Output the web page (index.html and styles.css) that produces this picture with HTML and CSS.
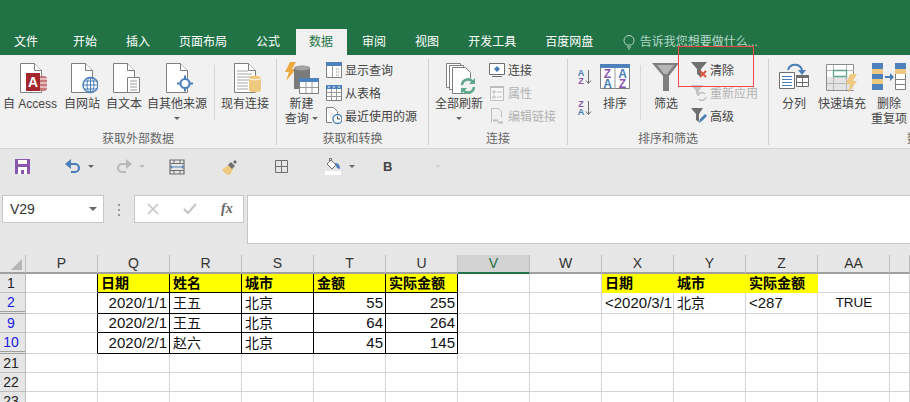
FILE: index.html
```html
<!DOCTYPE html>
<html lang="zh-CN">
<head>
  <meta charset="UTF-8">
  <meta name="viewport" content="width=device-width, initial-scale=1.0">
  <title>高级筛选</title>
  <link rel="stylesheet" href="styles.css">
</head>
<body>
  <svg class="defs" width="0" height="0">
    <symbol id="doc" viewBox="0 0 22 30"><path d="M.5.5h14l7 7v22H.5z" fill="#fff" stroke="#7f7f7f"/><path d="M14.5.5v7h7" fill="#fff" stroke="#7f7f7f"/></symbol>
    <symbol id="funnel" viewBox="0 0 16 16"><path d="M0 0h16L10 7v8L6 12V7z" fill="#6f6f6f"/></symbol>
  </svg>

  <div class="titlebar"></div>

  <div class="tabs">
    <span class="tab tab-first">文件</span>
    <span class="tab">开始</span>
    <span class="tab">插入</span>
    <span class="tab">页面布局</span>
    <span class="tab">公式</span>
    <span class="tab tab-active">数据</span>
    <span class="tab">审阅</span>
    <span class="tab">视图</span>
    <span class="tab">开发工具</span>
    <span class="tab">百度网盘</span>
    <span class="tellme">
      <svg width="12" height="15" viewBox="0 0 12 15"><path d="M3.500 10C2 8.500 1 7.500 1 5.500a5 5 0 0 1 10 0c0 2-1 3-2.500 4.500zM4 12h4M5 14h2" fill="none" stroke="#b5d8c6"/></svg>
      告诉我您想要做什么...
    </span>
  </div>

  <div class="ribbon">
    <section class="group group-ext">
      <div class="group-body">
        <div class="big w60">
          <svg class="icon" width="33" height="32" viewBox="0 0 33 32">
            <use href="#doc" x="6" y="1" width="22" height="30"/>
            <rect x="21" y="14" width="12" height="15" rx="3" fill="#c9787c"/>
            <path d="M22 17h11M22 21h11M22 25h11" stroke="#fff"/>
            <rect x="12" y="11" width="14" height="18" fill="#a4262c"/>
            <text x="19" y="25" class="svg-a">A</text>
          </svg>
          <span>自 Access</span>
        </div>
        <div class="big w44">
          <svg class="icon" width="32" height="32" viewBox="0 0 32 32">
            <use href="#doc" x="5" y="1" width="22" height="30"/>
            <circle cx="24.500" cy="23" r="7.500" fill="#fff" stroke="#4a7eb8" stroke-width="1.500"/>
            <path d="M17 23h15M18.500 19h12M18.500 27h12M24.500 15.500v15" stroke="#4a7eb8"/>
            <ellipse cx="24.500" cy="23" rx="3.500" ry="7.500" fill="none" stroke="#4a7eb8"/>
          </svg>
          <span>自网站</span>
        </div>
        <div class="big w40">
          <svg class="icon" width="32" height="32" viewBox="0 0 32 32">
            <use href="#doc" x="5" y="1" width="22" height="30"/>
            <path d="M19.500 15.500h12v15h-12z" fill="#fff" stroke="#7f7f7f"/>
            <path d="M22 19h7M22 22h7M22 25h7M22 28h7" stroke="#9a9a9a"/>
          </svg>
          <span>自文本</span>
        </div>
        <div class="big w66">
          <svg class="icon" width="32" height="32" viewBox="0 0 32 32">
            <use href="#doc" x="5" y="1" width="22" height="30"/>
            <circle cx="24" cy="21.500" r="4.500" fill="#fff" stroke="#4a7eb8" stroke-width="2"/>
            <path d="M16 21.500h4M28 21.500h4M24 13.500v4M24 25.500v4" stroke="#4a7eb8" stroke-width="2"/>
          </svg>
          <span>自其他来源</span>
          <i class="caret"></i>
        </div>
        <div class="vsep vsep-ext"></div>
        <div class="big w54">
          <svg class="icon" width="32" height="32" viewBox="0 0 32 32">
            <use href="#doc" x="5" y="1" width="22" height="30"/>
            <path d="M8 9h11M8 12h15M8 15h15M8 18h15M8 21h11M8 24h11M8 27h11" stroke="#a6a6a6"/>
            <path d="M20 16c0-3 12-3 12 0v12c0 3-12 3-12 0z" fill="#efc97f"/>
            <path d="M20 16c0 2.500 12 2.500 12 0" fill="none" stroke="#fff"/>
          </svg>
          <span>现有连接</span>
        </div>
      </div>
      <div class="group-label">获取外部数据</div>
    </section>

    <section class="group group-query">
      <div class="group-body">
        <div class="big w50">
          <svg class="icon" width="34" height="32" viewBox="0 0 34 32">
            <path d="M5 0h6L7 7h4L1 19l3-9H0z" fill="#eba93f"/>
            <path d="M9 6c0-3 16-3 16 0v21H9z" fill="#7a7a7a"/>
            <ellipse cx="17" cy="6" rx="8" ry="2.500" fill="#a3a3a3"/>
            <path d="M14.500 16.500h19v15h-19z" fill="#fff" stroke="#7f7f7f"/>
            <path d="M14 16h20v4H14z" fill="#4f81bd"/>
            <path d="M21 20v11M27 20v11M15 25.500h18" stroke="#9a9a9a"/>
          </svg>
          <span>新建</span>
          <span>查询 <i class="caret caret-inline"></i></span>
        </div>
        <div class="smalls">
          <div class="small">
            <svg width="16" height="16" viewBox="0 0 16 16"><path d="M.5 .5h15v15H.5z" fill="#fff" stroke="#7f7f7f"/><path d="M0 0h16v4H0z" fill="#4f81bd"/><path d="M6.500 4v11" stroke="#9a9a9a"/><path d="M10 7h4M10 10h4M10 13h4" stroke="#7f7f7f" stroke-dasharray="1 1"/></svg>
            <span>显示查询</span>
          </div>
          <div class="small">
            <svg width="16" height="16" viewBox="0 0 16 16"><path d="M.5 .5h15v15H.5z" fill="#fff" stroke="#7f7f7f"/><path d="M0 0h16v4H0z" fill="#4f81bd"/><path d="M2 2h2M7 2h2M12 2h2" stroke="#fff"/><path d="M5.500 4v11M10.500 4v11M1 7.500h14M1 11.500h14" stroke="#9a9a9a"/></svg>
            <span>从表格</span>
          </div>
          <div class="small">
            <svg width="16" height="17" viewBox="0 0 16 17"><path d="M.5 .5h7l4 4v4M6 15.500H.5V.5" fill="#fff" stroke="#7f7f7f"/><circle cx="11.500" cy="12" r="4.500" fill="#fff" stroke="#4a7eb8" stroke-width="1.300"/><path d="M11.500 9.500V12h2.500" fill="none" stroke="#444"/></svg>
            <span>最近使用的源</span>
          </div>
        </div>
      </div>
      <div class="group-label">获取和转换</div>
    </section>

    <section class="group group-conn">
      <div class="group-body">
        <div class="big w60 refresh">
          <svg class="icon" width="32" height="32" viewBox="0 0 32 32">
            <path d="M3.500 1.500h14v24h-14z" fill="#fff" stroke="#7f7f7f"/>
            <path d="M6.500 3.500h14v24h-14z" fill="#fff" stroke="#7f7f7f"/>
            <path d="M9.500 5.500h13l5 5v21h-18z" fill="#fff" stroke="#7f7f7f"/>
            <circle cx="25" cy="24" r="7.500" fill="#f1f1f1"/>
            <path d="M19 23a6 6 0 0 1 10.500-3.500M31 25a6 6 0 0 1-10.500 3.500" fill="none" stroke="#5fa88a" stroke-width="2.500"/>
            <path d="M32 16v6h-6zM18 32v-6h6z" fill="#5fa88a"/>
          </svg>
          <span>全部刷新</span>
          <i class="caret"></i>
        </div>
        <div class="smalls">
          <div class="small">
            <svg width="16" height="16" viewBox="0 0 16 16"><path d="M.5 1.500h15v11H.5z" fill="#fff" stroke="#6f6f6f"/><path d="M3 14.500h10" stroke="#6f6f6f"/><path d="M8 4l3 3-3 3-3-3z" fill="#4a7eb8"/></svg>
            <span>连接</span>
          </div>
          <div class="small off">
            <svg width="16" height="16" viewBox="0 0 16 16"><path d="M1.500 1.500h13v14h-13z" fill="#f7f7f7" stroke="#bdbdbd"/><path d="M1 1h14v2H1z" fill="#bdbdbd"/><path d="M4 6h2v2H4zM4 11h2v2H4z" fill="none" stroke="#bdbdbd"/><path d="M8 7h5M8 12h5" stroke="#bdbdbd"/></svg>
            <span>属性</span>
          </div>
          <div class="small off">
            <svg width="16" height="16" viewBox="0 0 16 16"><path d="M2.500 14.500V.5h7l3 3v6" fill="none" stroke="#bdbdbd"/><path d="M4 12.500h5M9 14.500h5" stroke="#bdbdbd" stroke-width="2"/></svg>
            <span>编辑链接</span>
          </div>
        </div>
      </div>
      <div class="group-label">连接</div>
    </section>

    <section class="group group-sort">
      <div class="group-body">
        <div class="sort-col">
          <svg width="15" height="17" viewBox="0 0 15 17">
            <text x="4" y="8" class="svg-az svg-blue">A</text><text x="4" y="16" class="svg-az svg-purple">Z</text>
            <path d="M11.500 2v13M9 12.500l2.500 3 2.500-3" fill="none" stroke="#6f6f6f"/>
          </svg>
          <svg width="15" height="17" viewBox="0 0 15 17">
            <text x="4" y="8" class="svg-az svg-purple">Z</text><text x="4" y="16" class="svg-az svg-blue">A</text>
            <path d="M11.500 2v13M9 12.500l2.500 3 2.500-3" fill="none" stroke="#6f6f6f"/>
          </svg>
        </div>
        <div class="big w42">
          <svg class="icon" width="30" height="32" viewBox="0 0 30 32">
            <path d="M.5 2.500h29v24H.5z" fill="#fff" stroke="#7f7f7f"/>
            <path d="M0 2h30v4H0z" fill="#4f81bd"/>
            <path d="M15 6v21" stroke="#9a9a9a"/>
            <text x="7.500" y="15.500" class="svg-big svg-purple">Z</text><text x="7.500" y="25.500" class="svg-big svg-blue">A</text>
            <text x="22.500" y="15.500" class="svg-big svg-blue">A</text><text x="22.500" y="25.500" class="svg-big svg-purple">Z</text>
          </svg>
          <span>排序</span>
        </div>
        <div class="vsep vsep-sort"></div>
        <div class="big w50">
          <svg class="icon" width="28" height="32" viewBox="0 0 28 32">
            <path d="M0 1h27L17 14v15h-6V14z" fill="#7f7f7f"/>
            <path d="M5 3h17l-7 9h-3z" fill="#b5b5b5"/>
          </svg>
          <span>筛选</span>
        </div>
        <div class="smalls">
          <div class="small">
            <svg width="16" height="16" viewBox="0 0 16 16"><use href="#funnel" width="16" height="16"/><path d="M9 9l6 6M15 9l-6 6" stroke="#d9573c" stroke-width="2"/></svg>
            <span>清除</span>
          </div>
          <div class="small off">
            <svg width="16" height="16" viewBox="0 0 16 16"><path d="M0 0h12L8 6v5L5 9V6z" fill="#c4c4c4"/><path d="M7 11a4 4 0 0 1 7-2M15 12a4 4 0 0 1-7 2" fill="none" stroke="#bdbdbd" stroke-width="1.500"/></svg>
            <span>重新应用</span>
          </div>
          <div class="small">
            <svg width="16" height="16" viewBox="0 0 16 16"><path d="M0 0h12L8 6v8L5 12V6z" fill="#6f6f6f"/><path d="M8 15l1-4 5-5 2 2-5 5z" fill="#4a7eb8"/></svg>
            <span>高级</span>
          </div>
        </div>
      </div>
      <div class="group-label">排序和筛选</div>
    </section>

    <section class="group group-tools">
      <div class="group-body">
        <div class="big w50">
          <svg class="icon" width="30" height="32" viewBox="0 0 30 32">
            <path d="M.5 10.500h15v16H.5z" fill="#fff" stroke="#6f6f6f"/>
            <path d="M3 14.500h10M3 17.500h10M3 20.500h10M3 23.500h10" stroke="#4a7eb8"/>
            <path d="M17.500 13.500h12v11h-12z" fill="#fff" stroke="#6f6f6f"/>
            <path d="M17 13h13v3H17z" fill="#6f6f6f"/>
            <path d="M23.500 16v8M18 20.500h11" stroke="#6f6f6f"/>
            <path d="M9 8C11 1 21 1 23 8" fill="none" stroke="#4a7eb8" stroke-width="2"/>
            <path d="M19 8h8l-4 5z" fill="#4a7eb8"/>
          </svg>
          <span>分列</span>
        </div>
        <div class="big w-fill">
          <svg class="icon" width="32" height="32" viewBox="0 0 32 32">
            <path d="M.5 2.500h27v26H.5z" fill="#fff" stroke="#8c8c8c"/>
            <path d="M1 15h27v13H1z" fill="#e4e4e4"/>
            <path d="M7.500 3v25M20.500 3v25M1 8.500h27M1 21.500h27" stroke="#b5b5b5"/>
            <path d="M7.500 8.500h13v6h-13z" fill="#fff" stroke="#5fa88a" stroke-width="1.300"/>
            <path d="M24 12h7l-4 7h4l-9 12 2-9h-4z" fill="#efc97f"/>
          </svg>
          <span>快速填充</span>
        </div>
        <div class="big w-dedupe">
          <svg class="icon" width="34" height="32" viewBox="0 0 34 32">
            <path d="M0 1h11v27H0z" fill="#4f81bd"/>
            <path d="M0 7h11v5H0zM0 17h11v5H0z" fill="#efc97f"/>
            <path d="M13 15h7" stroke="#4a7eb8" stroke-width="2"/><path d="M18 11l4 4-4 4z" fill="#4a7eb8"/>
            <path d="M23.500 1.500h10v26h-10z" fill="#fff" stroke="#7f7f7f"/>
            <path d="M23 1h11v6H23z" fill="#4f81bd"/>
            <path d="M23 7h11v5H23z" fill="#efc97f"/>
            <path d="M24 17.500h9M24 22.500h9" stroke="#7f7f7f"/>
          </svg>
          <span>删除</span>
          <span>重复项</span>
        </div>
      </div>
      <div class="group-label group-label-cut">数据工具</div>
    </section>
  </div>

  <div class="redbox"></div>

  <div class="qat">
    <svg width="15" height="15" viewBox="0 0 15 15"><path d="M0 0h15v15H0z" fill="#8a57ad"/><path d="M3 1h9v4H3z" fill="#fff"/><path d="M3 8h9v7H3z" fill="#fff"/><path d="M6 11h3v4H6z" fill="#8a57ad"/></svg>
    <span class="qat-btn">
      <svg width="16" height="16" viewBox="0 0 16 16"><path d="M2 5h8a4 4 0 0 1 0 8H6" fill="none" stroke="#4a7eb8" stroke-width="2.200"/><path d="M6 0v10L0 5z" fill="#4a7eb8"/></svg>
    </span>
    <i class="caret"></i>
    <span class="qat-btn">
      <svg width="16" height="16" viewBox="0 0 16 16"><path d="M14 5H6a4 4 0 0 0 0 8h4" fill="none" stroke="#b9b9b9" stroke-width="2.200"/><path d="M10 0v10l6-5z" fill="#b9b9b9"/></svg>
    </span>
    <i class="caret caret-off"></i>
    <svg width="16" height="16" viewBox="0 0 16 16"><path d="M1 1h14v14H1z" fill="none" stroke="#6f6f6f" stroke-width="1.200"/><path d="M1 4.500h14M1 11.500h14M5 1v3.500M11 1v3.500M5 11.500V15M11 11.500V15" stroke="#6f6f6f"/><path d="M3 8h10" stroke="#4a7eb8"/><path d="M3 6l-2 2 2 2zM13 6l2 2-2 2z" fill="#4a7eb8"/></svg>
    <svg width="16" height="16" viewBox="0 0 16 16"><path d="M0 11l6-5 5 4-3 6c-3 0-6-2-8-5z" fill="#efc97f"/><path d="M6 6l3-3 4 4-3 3z" fill="#6f6f6f"/><path d="M11 3l2-2 2 2-2 2z" fill="#6f6f6f"/></svg>
    <svg width="14" height="14" viewBox="0 0 14 14"><path d="M.5 .5h12v12H.5zM6.500 .5v12M.5 6.500h12" fill="none" stroke="#6f6f6f"/></svg>
    <svg width="16" height="18" viewBox="0 0 16 18"><path d="M0 13h16v4H0z" fill="#fff"/><path d="M6 2l5 5-4 4-5-5z" fill="#fff" stroke="#6f6f6f"/><path d="M4.500 4V.5h2V3" fill="none" stroke="#6f6f6f"/><path d="M10 5c3 0 5 2 5 6l-3-1z" fill="#4a7eb8"/></svg>
    <i class="caret"></i>
    <b class="qat-bold">B</b>
    <i class="caret caret-faint"></i>
  </div>

  <div class="formula-row">
    <div class="namebox"><span>V29</span><i class="caret caret-name"></i></div>
    <div class="dots"><i></i><i></i><i></i></div>
    <div class="fxbox">
      <svg width="12" height="12" viewBox="0 0 12 12"><path d="M1 1l10 10M11 1L1 11" stroke="#c6c6c6" stroke-width="1.600"/></svg>
      <svg width="14" height="12" viewBox="0 0 14 12"><path d="M1 6l4 4 8-9" fill="none" stroke="#c6c6c6" stroke-width="2.200"/></svg>
      <span class="fx">fx</span>
    </div>
    <div class="formula-input"></div>
  </div>

  <div class="sheet">
    <table class="cells">
      <colgroup><col class="col-rowhead"><col span="12" class="col-data"><col class="col-rest"></colgroup>
      <tr class="colheads">
        <th class="corner"><i></i></th><th>P</th><th>Q</th><th>R</th><th>S</th><th>T</th><th>U</th><th class="col-sel">V</th><th>W</th><th>X</th><th>Y</th><th>Z</th><th>AA</th><th></th>
      </tr>
      <tr>
        <th class="rowhead">1</th>
        <td class="kr"></td>
        <td class="k hd">日期</td><td class="k hd">姓名</td><td class="k hd">城市</td><td class="k hd">金额</td><td class="k hd">实际金额</td>
        <td></td><td></td>
        <td class="hd plain">日期</td><td class="hd plain">城市</td><td class="hd plain">实际金额</td>
        <td></td><td></td>
      </tr>
      <tr>
        <th class="rowhead blue hid">2</th>
        <td class="kr"></td>
        <td class="k num">2020/1/1</td><td class="k">王五</td><td class="k">北京</td><td class="k num">55</td><td class="k num">255</td>
        <td></td><td></td>
        <td class="crit">&lt;2020/3/1</td><td>北京</td><td class="crit">&lt;287</td><td class="mid">TRUE</td><td></td>
      </tr>
      <tr>
        <th class="rowhead blue">9</th>
        <td class="kr"></td>
        <td class="k num">2020/2/1</td><td class="k">王五</td><td class="k">北京</td><td class="k num">64</td><td class="k num">264</td>
        <td></td><td></td><td></td><td></td><td></td><td></td><td></td>
      </tr>
      <tr>
        <th class="rowhead blue hid">10</th>
        <td class="kr"></td>
        <td class="k num">2020/2/1</td><td class="k">赵六</td><td class="k">北京</td><td class="k num">45</td><td class="k num">145</td>
        <td></td><td></td><td></td><td></td><td></td><td></td><td></td>
      </tr>
      <tr>
        <th class="rowhead">21</th>
        <td></td><td></td><td></td><td></td><td></td><td></td><td></td><td></td><td></td><td></td><td></td><td></td><td></td>
      </tr>
      <tr>
        <th class="rowhead">22</th>
        <td></td><td></td><td></td><td></td><td></td><td></td><td></td><td></td><td></td><td></td><td></td><td></td><td></td>
      </tr>
      <tr>
        <th class="rowhead">23</th>
        <td></td><td></td><td></td><td></td><td></td><td></td><td></td><td></td><td></td><td></td><td></td><td></td><td></td>
      </tr>
    </table>
  </div>
</body>
</html>
```

FILE: styles.css
```css
* {
  box-sizing: border-box;
}

html, body {
  margin: 0;
  height: 402px;
  overflow: hidden;
}

body {
  position: relative;
  background: #e6e6e6;
  color: #444;
  font-family: "Liberation Sans", "Noto Sans CJK SC", sans-serif;
  font-size: 12px;
}

.defs {
  position: absolute;
}

/* top green bars */
.titlebar {
  height: 29px;
  background: #217346;
}

.tabs {
  display: flex;
  height: 26px;
  background: #217346;
  color: #fff;
  line-height: 26px;
}

.tab {
  padding: 0 14.5px;
}

.tab-first {
  padding: 0 20.5px 0 14px;
}

.tab-active {
  margin: 0 .5px 0 1.5px;
  padding: 0 14px 0 13px;
  background: #f1f1f1;
  color: #217346;
}

.tellme {
  display: flex;
  align-items: center;
  gap: 5px;
  margin-left: 15px;
  color: #b5d8c6;
}

/* ribbon */
.ribbon {
  display: flex;
  height: 94px;
  padding-top: 4px;
  background: #f1f1f1;
  border-bottom: 1px solid #d5d5d5;
  overflow: hidden;
}

.group {
  flex: none;
  height: 86px;
  border-right: 1px solid #d0d0d0;
}

.group-ext { width: 277px; }
.group-query { width: 152px; }
.group-conn { width: 139px; }
.group-sort { width: 201px; }
.group-tools { width: 141px; border-right: 0; }

.group-body {
  display: flex;
  height: 73px;
}

.group-label {
  height: 13px;
  color: #666;
  line-height: 15px;
  text-align: center;
}

.group-label-cut {
  padding-left: 138px;
  text-align: left;
  white-space: nowrap;
}

.big {
  display: flex;
  flex: none;
  flex-direction: column;
  align-items: center;
  line-height: 15px;
  white-space: nowrap;
}

.icon {
  flex: none;
  margin: 3px 0;
}

.w40 { width: 40px; }
.w42 { width: 42px; }
.w44 { width: 44px; }
.w50 { width: 50px; }
.w54 { width: 54px; }
.w60 { width: 60px; }
.w66 { width: 66px; }

.w-fill { width: 46px; }
.w-dedupe { width: 48px; }

.vsep {
  flex: none;
  width: 1px;
  margin-top: 6px;
  height: 55px;
  background: #d8d8d8;
}

.vsep-ext { margin: 6px 3px 0 4px; }
.vsep-sort { margin: 6px 0 0 4px; }

.group-query .big { width: 49px; }

.smalls {
  display: flex;
  flex-direction: column;
  margin-top: -1px;
}

.small {
  display: flex;
  align-items: center;
  gap: 3px;
  height: 23px;
  white-space: nowrap;
}

.off {
  color: #b3b3b3;
}

.sort-col {
  display: flex;
  flex: none;
  flex-direction: column;
  gap: 14px;
  width: 26px;
  padding: 9px 0 0 9px;
}

.caret {
  display: block;
  flex: none;
  width: 0;
  height: 0;
  margin-top: 5px;
  border: 3px solid transparent;
  border-top: 3px solid #666;
  border-bottom: 0;
}

.caret-inline {
  display: inline-block;
  margin: 0 0 2px;
  vertical-align: middle;
}

.caret-off { border-top-color: #bdbdbd; }
.caret-faint { border-top-color: #d4d4d4; }

.svg-a {
  fill: #fff;
  font-size: 14px;
  font-weight: 700;
  text-anchor: middle;
}

.svg-az {
  font-size: 9px;
  font-weight: 700;
  text-anchor: middle;
}

.svg-big {
  font-size: 12px;
  font-weight: 700;
  text-anchor: middle;
}

.svg-blue { fill: #4a7eb8; }
.svg-purple { fill: #8a57ad; }

/* red annotation drawn over the screenshot */
.redbox {
  position: absolute;
  left: 678px;
  top: 46px;
  width: 76px;
  height: 41px;
  border: 1px solid #f44;
}

/* quick access */
.qat {
  display: grid;
  grid-template-columns: 50px 23px 28px 23px 30px 53px 53px 50px 24px 34px 52px 6px;
  align-items: center;
  justify-items: start;
  height: 46px;
  padding: 0 0 11px 15px;
}

.qat .caret {
  margin-top: 0;
}

.qat-btn {
  display: flex;
}

.qat-bold {
  color: #444;
  font-size: 13px;
}

/* name box + formula bar */
.formula-row {
  display: flex;
  align-items: flex-start;
  height: 60px;
  padding-left: 2px;
}

.namebox {
  display: flex;
  align-items: center;
  justify-content: space-between;
  width: 102px;
  height: 28px;
  padding: 0 6px 0 7px;
  background: #fff;
  border: 1px solid #c6c6c6;
  color: #333;
  font-size: 14px;
}

.caret-name {
  margin: 0;
  border-width: 4px;
  border-top-width: 4px;
  border-bottom: 0;
}

.dots {
  display: flex;
  flex-direction: column;
  gap: 3px;
  align-items: center;
  width: 30px;
  padding-top: 9px;
}

.dots i {
  width: 2px;
  height: 2px;
  background: #9a9a9a;
}

.fxbox {
  display: flex;
  align-items: center;
  gap: 24px;
  width: 110px;
  height: 28px;
  padding-left: 12px;
  background: #fff;
  border: 1px solid #c6c6c6;
}

.fx {
  color: #666;
  font-family: "Liberation Serif", serif;
  font-size: 14px;
  font-style: italic;
  font-weight: 700;
}

.formula-input {
  flex: 1;
  height: 49px;
  margin-left: 3px;
  background: #fff;
  border: 1px solid #c6c6c6;
  border-right: 0;
}

/* worksheet */
.sheet {
  height: 147px;
  overflow: hidden;
  background: #fff;
}

.cells {
  width: 910px;
  table-layout: fixed;
  border-collapse: separate;
  border-spacing: 0;
  color: #111;
  font-size: 15px;
}

.col-rowhead { width: 26px; }
.col-data { width: 72px; }
.col-rest { width: 20px; }

.cells tr {
  height: 19px;
}

.cells td {
  height: 19px;
  padding: 0 2px 0 3px;
  border-right: 1px solid #d4d4d4;
  border-bottom: 1px solid #d4d4d4;
  font-size: 14px;
  line-height: 18px;
  overflow: hidden;
  white-space: nowrap;
}

.cells td.k {
  border-right-color: #000;
  border-bottom-color: #000;
}

.cells td.kr {
  border-right-color: #000;
}

.cells td.hd {
  background: #ff0;
  color: #000;
  font-weight: 700;
}

.cells td.plain {
  border-right-color: #ff0;
  border-bottom-color: #ff0;
}

.cells td.num,
.cells td.crit {
  font-size: 15px;
}

.cells td.num {
  text-align: right;
}

.cells td.mid {
  font-size: 13.5px;
  text-align: center;
}

.colheads th {
  height: 19px;
  padding: 0;
  background: #e6e6e6;
  border-right: 1px solid #bdbdbd;
  border-bottom: 2px solid #a0a0a0;
  color: #333;
  font-size: 14px;
  font-weight: 400;
  line-height: 17px;
}

.colheads th.col-sel {
  background: #d2d2d2;
  border-bottom-color: #217346;
  color: #217346;
}

.corner {
  position: relative;
}

.corner i {
  position: absolute;
  right: 3px;
  bottom: 2px;
  border-style: solid;
  border-width: 0 0 11px 11px;
  border-color: transparent transparent #b5b5b5 transparent;
}

.rowhead {
  height: 19px;
  padding: 0 3px 0 0;
  background: #e6e6e6;
  border-right: 1px solid #bdbdbd;
  border-bottom: 1px solid #bdbdbd;
  color: #222;
  font-size: 14px;
  font-weight: 400;
  line-height: 18px;
}

.rowhead.blue {
  color: #1a1ae6;
}

.rowhead.hid {
  border-bottom: 3px double #a0a0a0;
}
```
